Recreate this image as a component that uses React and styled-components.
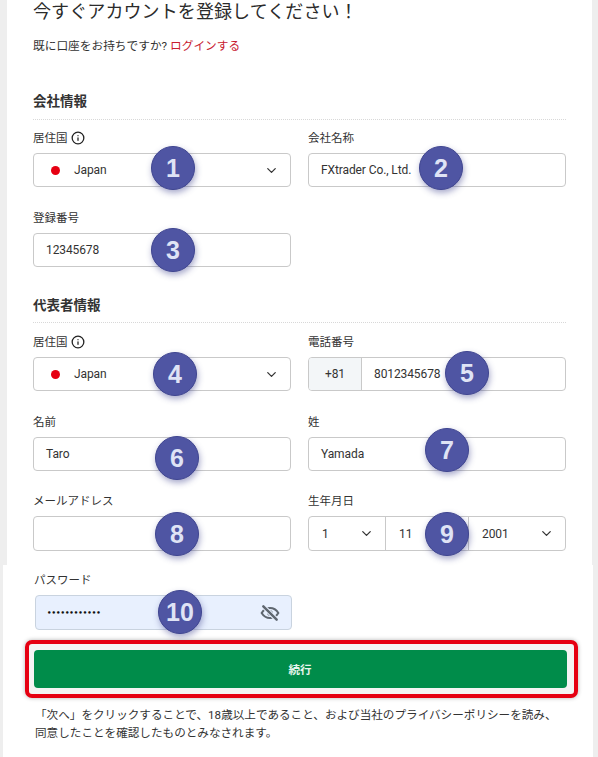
import React from 'react';
import styled, { createGlobalStyle } from 'styled-components';
import { ChevronDown, Info } from 'lucide-react';

const GlobalStyle = createGlobalStyle`
  html, body {
    margin: 0;
    padding: 0;
    background: #eeeeee;
  }
  body {
    width: 598px;
    height: 757px;
    overflow: hidden;
    font-family: 'Roboto', 'Noto Sans CJK JP', sans-serif;
    color: #333;
  }
  * {
    box-sizing: border-box;
  }
`;

const TopCard = styled.div`
  width: 585px;
  height: 565px;
  margin-left: 7px;
  padding: 2px 26px 0;
  background: #fff;
`;

const BottomCard = styled.div`
  width: 590px;
  height: 192px;
  margin-left: 3px;
  padding: 6px 26px 0 31px;
  background: #fff;
`;

const Title = styled.h1`
  margin: 0;
  height: 20px;
  font-size: 18px;
  line-height: 20px;
  font-weight: 400;
  letter-spacing: 0.1px;
  color: #2b2b2b;
  white-space: nowrap;
`;

const LoginLine = styled.p`
  margin: 15px 0 0;
  font-size: 11.7px;
  line-height: 18px;
  color: #333;

  a {
    color: #c8202f;
    text-decoration: none;
  }
`;

const SectionTitle = styled.h2`
  margin: ${(p) => p.$top}px 0 0;
  height: ${(p) => p.$height}px;
  font-size: 13.5px;
  line-height: 18px;
  font-weight: 700;
  color: #333;
  border-bottom: 1px dotted #d8d8d8;
`;

const Grid = styled.div`
  display: grid;
  grid-template-columns: 258px 258px;
  column-gap: 17px;
  margin-top: ${(p) => p.$top || 0}px;
`;

const Field = styled.div`
  display: flex;
  flex-direction: column;
`;

const Label = styled.label`
  display: flex;
  align-items: center;
  gap: 3px;
  height: 16px;
  padding-top: 2px;
  margin-bottom: 8px;
  font-size: 11.5px;
  line-height: 16px;
  color: #333;

  svg {
    color: #222;
  }
`;

const Control = styled.div`
  position: relative;
  display: flex;
  align-items: center;
  height: ${(p) => p.$height || 34}px;
  padding: 0 12px;
  background: ${(p) => (p.$filled ? '#e8f0fe' : '#fff')};
  border: 1px solid #c9c9c9;
  border-radius: 4px;
  font-size: 12px;
  letter-spacing: -0.1px;
  color: #333;
`;

const SelectControl = styled(Control)`
  justify-content: space-between;
  padding: 0 11px 0 17px;
`;

const Country = styled.span`
  display: flex;
  align-items: center;
  gap: 14px;
`;

const Dot = styled.span`
  width: 9px;
  height: 9px;
  border-radius: 50%;
  background: #e60012;
`;

const PhoneControl = styled(Control)`
  padding: 0;
`;

const Prefix = styled.span`
  display: flex;
  align-items: center;
  justify-content: center;
  width: 53px;
  height: 100%;
  background: #f3f6f8;
  border-right: 1px solid #c9c9c9;
  border-radius: 3px 0 0 3px;
`;

const PhoneNumber = styled.span`
  padding-left: 12px;
`;

const DateControl = styled(Control)`
  padding: 0;
`;

const DatePart = styled.span`
  display: flex;
  align-items: center;
  justify-content: space-between;
  width: ${(p) => p.$width}px;
  height: 100%;
  padding: 0 11px 0 13px;
  border-right: ${(p) => (p.$last ? 'none' : '1px solid #c9c9c9')};
`;

const Dots = styled.span`
  font-family: 'DejaVu Sans', sans-serif;
  font-size: 7px;
  font-weight: 700;
  letter-spacing: 0;
  color: #111;
`;

const PasswordControl = styled(Control)`
  justify-content: space-between;
  margin-left: 1px;
  padding: 0 11px 0 11px;
  border-color: #c9d3df;
`;

const Badge = styled.span`
  position: absolute;
  left: ${(p) => p.$left}px;
  top: ${(p) => p.$top}px;
  z-index: 2;
  display: flex;
  align-items: center;
  justify-content: center;
  width: 44px;
  height: 44px;
  border-radius: 50%;
  background: #4f55a3;
  border: 1px solid #3f4590;
  box-shadow: 1px 3px 6px rgba(60, 65, 140, 0.45);
  color: #dfe3f5;
  font-family: 'Liberation Sans', sans-serif;
  font-size: 25px;
  font-weight: 700;
  letter-spacing: 0;
`;

const Highlight = styled.div`
  width: 553px;
  margin: 10px 0 0 -9.5px;
  padding: 6px 6px 6px 5px;
  background: #f4f4f4;
  border: 4.5px solid #e60012;
  border-radius: 7px;
  box-shadow: 0 0 4px rgba(0, 0, 0, 0.3);
`;

const ContinueButton = styled.button`
  display: block;
  width: 533px;
  height: 38px;
  padding: 0;
  background: #008c4a;
  border: none;
  border-radius: 4px;
  color: #e6f5ec;
  font-family: inherit;
  font-size: 11.5px;
  font-weight: 700;
`;

const Notice = styled.p`
  margin: 7.5px 0 0 1px;
  width: 530px;
  font-size: 11.6px;
  line-height: 18px;
  color: #333;
`;

const Chevron = () => <ChevronDown size={15} strokeWidth={2} color="#333" />;

const EyeOff = () => (
  <svg width="20" height="20" viewBox="0 0 24 24" fill="none" stroke="#5f6770" strokeLinecap="round">
    <path d="M2 12s3.6-6 10-6 10 6 10 6-3.6 6-10 6-10-6-10-6z" strokeWidth="2.4" />
    <circle cx="12" cy="12" r="3" fill="#5f6770" strokeWidth="1" />
    <path d="M4 4l16 16" stroke="#e8f0fe" strokeWidth="5.5" />
    <path d="M4 4l16 16" strokeWidth="3" />
  </svg>
);

const App = () => {
  return (
    <>
      <GlobalStyle />
      <TopCard>
        <Title>今すぐアカウントを登録してください！</Title>
        <LoginLine>
          既に口座をお持ちですか? <a href="#login">ログインする</a>
        </LoginLine>

        <SectionTitle $top={37} $height={28}>会社情報</SectionTitle>
        <Grid $top={9}>
          <Field>
            <Label>
              居住国 <Info size={14} strokeWidth={2.2} />
            </Label>
            <SelectControl>
              <Country>
                <Dot />
                Japan
              </Country>
              <Chevron />
              <Badge $left={117} $top={-8}>1</Badge>
            </SelectControl>
          </Field>
          <Field>
            <Label>会社名称</Label>
            <Control>
              FXtrader Co., Ltd.
              <Badge $left={110} $top={-8}>2</Badge>
            </Control>
          </Field>
        </Grid>
        <Grid $top={22}>
          <Field>
            <Label>登録番号</Label>
            <Control>
              12345678
              <Badge $left={117} $top={-6}>3</Badge>
            </Control>
          </Field>
        </Grid>

        <SectionTitle $top={29} $height={27}>代表者情報</SectionTitle>
        <Grid $top={10}>
          <Field>
            <Label>
              居住国 <Info size={14} strokeWidth={2.2} />
            </Label>
            <SelectControl>
              <Country>
                <Dot />
                Japan
              </Country>
              <Chevron />
              <Badge $left={119} $top={-6}>4</Badge>
            </SelectControl>
          </Field>
          <Field>
            <Label>電話番号</Label>
            <PhoneControl>
              <Prefix>+81</Prefix>
              <PhoneNumber>8012345678</PhoneNumber>
              <Badge $left={136} $top={-7}>5</Badge>
            </PhoneControl>
          </Field>
        </Grid>
        <Grid $top={22}>
          <Field>
            <Label>名前</Label>
            <Control>
              Taro
              <Badge $left={121} $top={-2}>6</Badge>
            </Control>
          </Field>
          <Field>
            <Label>姓</Label>
            <Control>
              Yamada
              <Badge $left={116} $top={-10}>7</Badge>
            </Control>
          </Field>
        </Grid>
        <Grid $top={21}>
          <Field>
            <Label>メールアドレス</Label>
            <Control $height={35}>
              <Badge $left={121} $top={-5}>8</Badge>
            </Control>
          </Field>
          <Field>
            <Label>生年月日</Label>
            <DateControl $height={35}>
              <DatePart $width={77}>
                1 <Chevron />
              </DatePart>
              <DatePart $width={83}>11</DatePart>
              <DatePart $width={96} $last>
                2001 <Chevron />
              </DatePart>
              <Badge $left={116} $top={-5}>9</Badge>
            </DateControl>
          </Field>
        </Grid>
      </TopCard>

      <BottomCard>
        <Grid>
          <Field>
            <Label>パスワード</Label>
            <PasswordControl $height={35} $filled>
              <Dots>••••••••••••</Dots>
              <EyeOff />
              <Badge $left={122} $top={-6}>10</Badge>
            </PasswordControl>
          </Field>
        </Grid>
        <Highlight>
          <ContinueButton>続行</ContinueButton>
        </Highlight>
        <Notice>
          「次へ」をクリックすることで、18歳以上であること、および当社のプライバシーポリシーを読み、同意したことを確認したものとみなされます。
        </Notice>
      </BottomCard>
    </>
  );
};

export default App;
